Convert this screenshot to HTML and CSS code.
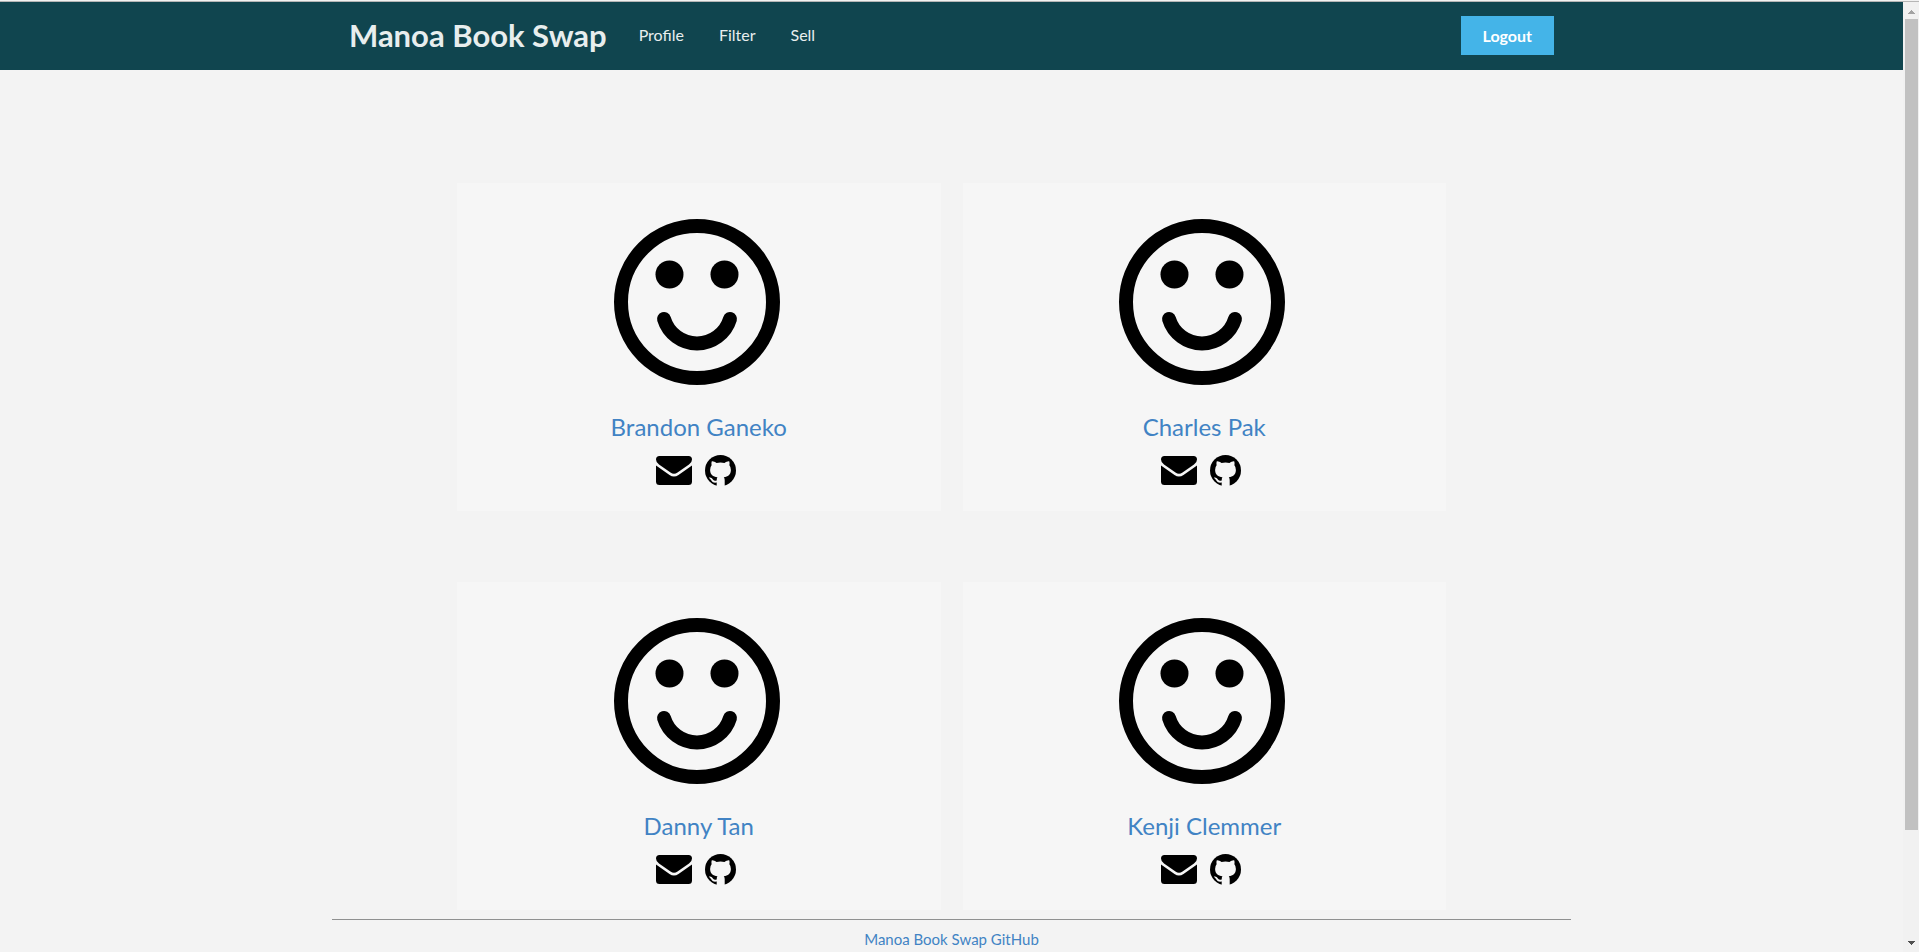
FILE: index.html
```html
<!DOCTYPE html>
<html lang="en">
<head>
<meta charset="utf-8">
<title>Manoa Book Swap</title>
<link rel="stylesheet" href="styles.css">
</head>
<body>
<svg class="sprite" aria-hidden="true">
  <symbol id="smile" viewBox="0 0 166 166">
    <circle cx="83" cy="83" r="76" fill="none" stroke="#000" stroke-width="14"/>
    <circle cx="55.5" cy="55.5" r="14"/><circle cx="110.5" cy="55.5" r="14"/>
    <path d="M50 100A34.500 34.500 0 0 0 116 100" fill="none" stroke="#000" stroke-width="14" stroke-linecap="round"/>
  </symbol>
  <symbol id="mail" viewBox="0 0 36 29">
    <path d="M3.500 0H32.500Q36 0 36 3.500Q36 6.500 33 8.500L21.500 16.500Q18 19 14.500 16.500L3 8.500Q0 6.500 0 3.500Q0 0 3.500 0Z"/>
    <path d="M0 9.500L13.500 19Q18 22 22.500 19L36 9.500V25.500Q36 29 32.500 29H3.500Q0 29 0 25.500Z"/>
  </symbol>
  <symbol id="github" viewBox="0 0 31 31">
    <circle cx="15.500" cy="15.500" r="15.500"/>
    <path fill="#f6f6f6" d="M6.800 6.200C8.300 6 10 6.900 11.500 7.900Q15.500 7 19.500 7.900C21 6.900 22.700 6 24.200 6.200Q25 8.300 24.400 10.200Q26.100 12.200 25.900 15C25.700 20 23 21.700 18.800 22.200Q19.700 23.200 19.700 25V31H11.700V27.600C8.500 28.200 7 26.700 6 25C5.400 23.900 4.600 23.300 3.800 22.700C6 22 7.300 23.600 8.100 24.800C9 26 10.300 26 11.700 25.500Q11.700 23.300 12.400 22.200C8 21.700 5.300 20 5.100 15Q4.900 12.200 6.600 10.200Q6 8.300 6.800 6.200Z"/>
  </symbol>
</svg>
<div class="window">
  <div class="page">
    <header class="navbar">
      <nav class="container">
        <a class="brand" href="#">Manoa Book Swap</a>
        <a class="item" href="#">Profile</a>
        <a class="item" href="#">Filter</a>
        <a class="item" href="#">Sell</a>
        <button class="logout" type="button">Logout</button>
      </nav>
    </header>
    <main class="team">
      <article class="card">
        <svg class="face"><use href="#smile"/></svg>
        <a class="name" href="#">Brandon Ganeko</a>
        <div class="links"><a href="#" aria-label="Email"><svg class="mail"><use href="#mail"/></svg></a><a href="#" aria-label="GitHub"><svg class="github"><use href="#github"/></svg></a></div>
      </article>
      <article class="card">
        <svg class="face"><use href="#smile"/></svg>
        <a class="name" href="#">Charles Pak</a>
        <div class="links"><a href="#" aria-label="Email"><svg class="mail"><use href="#mail"/></svg></a><a href="#" aria-label="GitHub"><svg class="github"><use href="#github"/></svg></a></div>
      </article>
      <article class="card">
        <svg class="face"><use href="#smile"/></svg>
        <a class="name" href="#">Danny Tan</a>
        <div class="links"><a href="#" aria-label="Email"><svg class="mail"><use href="#mail"/></svg></a><a href="#" aria-label="GitHub"><svg class="github"><use href="#github"/></svg></a></div>
      </article>
      <article class="card">
        <svg class="face"><use href="#smile"/></svg>
        <a class="name" href="#">Kenji Clemmer</a>
        <div class="links"><a href="#" aria-label="Email"><svg class="mail"><use href="#mail"/></svg></a><a href="#" aria-label="GitHub"><svg class="github"><use href="#github"/></svg></a></div>
      </article>
    </main>
    <footer class="footer"><a href="#">Manoa Book Swap GitHub</a></footer>
  </div>
  <div class="scrollbar" aria-hidden="true">
    <svg class="arrow up" viewBox="0 0 7 4"><path d="M3 0h1v1h1v1h1v1h1v1H0V3h1V2h1V1h1z"/></svg>
    <div class="thumb"></div>
    <svg class="arrow down" viewBox="0 0 7 4"><path d="M0 0h7v1H6v1H5v1H4v1H3V3H2V2H1V1H0z"/></svg>
  </div>
</div>
</body>
</html>
```

FILE: styles.css
```css
* { box-sizing: border-box; }
body {
  margin: 0;
  font: 16px/20px Lato, "Liberation Sans", sans-serif;
  background: #f3f3f3;
}
a { color: #4183c4; text-decoration: none; }
svg { display: block; }
.sprite { position: absolute; width: 0; height: 0; }
.window {
  display: flex;
  height: 100vh;
  overflow: hidden;
  border-top: 1px solid #f2f2f2;
}
.page { flex: 1; border-top: 1px solid #b6b6b6; }
.navbar { background: #10454f; }
.container {
  display: flex;
  align-items: center;
  gap: 1px;
  max-width: 1239px;
  height: 68px;
  margin: 0 auto;
  padding: 0 17px 2px;
}
.brand {
  margin-right: 14px;
  color: #e8eeee;
  font-size: 31px;
  line-height: 40px;
  font-weight: 700;
}
.item { padding: 0 17px; color: #e8eeee; }
.logout {
  margin-left: auto;
  padding: 9px 22px;
  border: 0;
  background: #44b4e8;
  color: #fff;
  font: 700 16px/21px Lato, sans-serif;
}
.team {
  display: grid;
  grid-template-columns: 1fr 1fr;
  gap: 71px 22px;
  max-width: 989px;
  margin: 113px auto 9px;
}
.card {
  display: flex;
  flex-direction: column;
  align-items: center;
  padding: 36px 0 25px;
  background: #f6f6f6;
}
.face { width: 166px; height: 166px; margin-right: 4px; }
.name { margin-top: 26px; font-size: 24px; line-height: 32px; }
.links {
  display: flex;
  gap: 13px;
  align-items: center;
  margin: 12px 6px 0 0;
}
.mail { width: 36px; height: 29px; }
.github { width: 31px; height: 31px; }
.footer {
  max-width: 1239px;
  margin: 0 auto;
  padding: 9px 0;
  border-top: 1px solid #8f9090;
  font-size: 15px;
  text-align: center;
}
.scrollbar {
  display: flex;
  flex-direction: column;
  align-items: center;
  width: 16px;
  padding: 8px 0 7px;
  border-top: 1px solid #b6b6b6;
  background: #f1f1f1;
}
.arrow { width: 7px; height: 4px; }
.up { fill: #a3a3a3; }
.down { margin-top: auto; fill: #505050; }
.thumb { flex: 0 0 810px; flex-basis: 86.7%; width: 13px; margin-top: 5px; background: #c1c1c1; }
```
